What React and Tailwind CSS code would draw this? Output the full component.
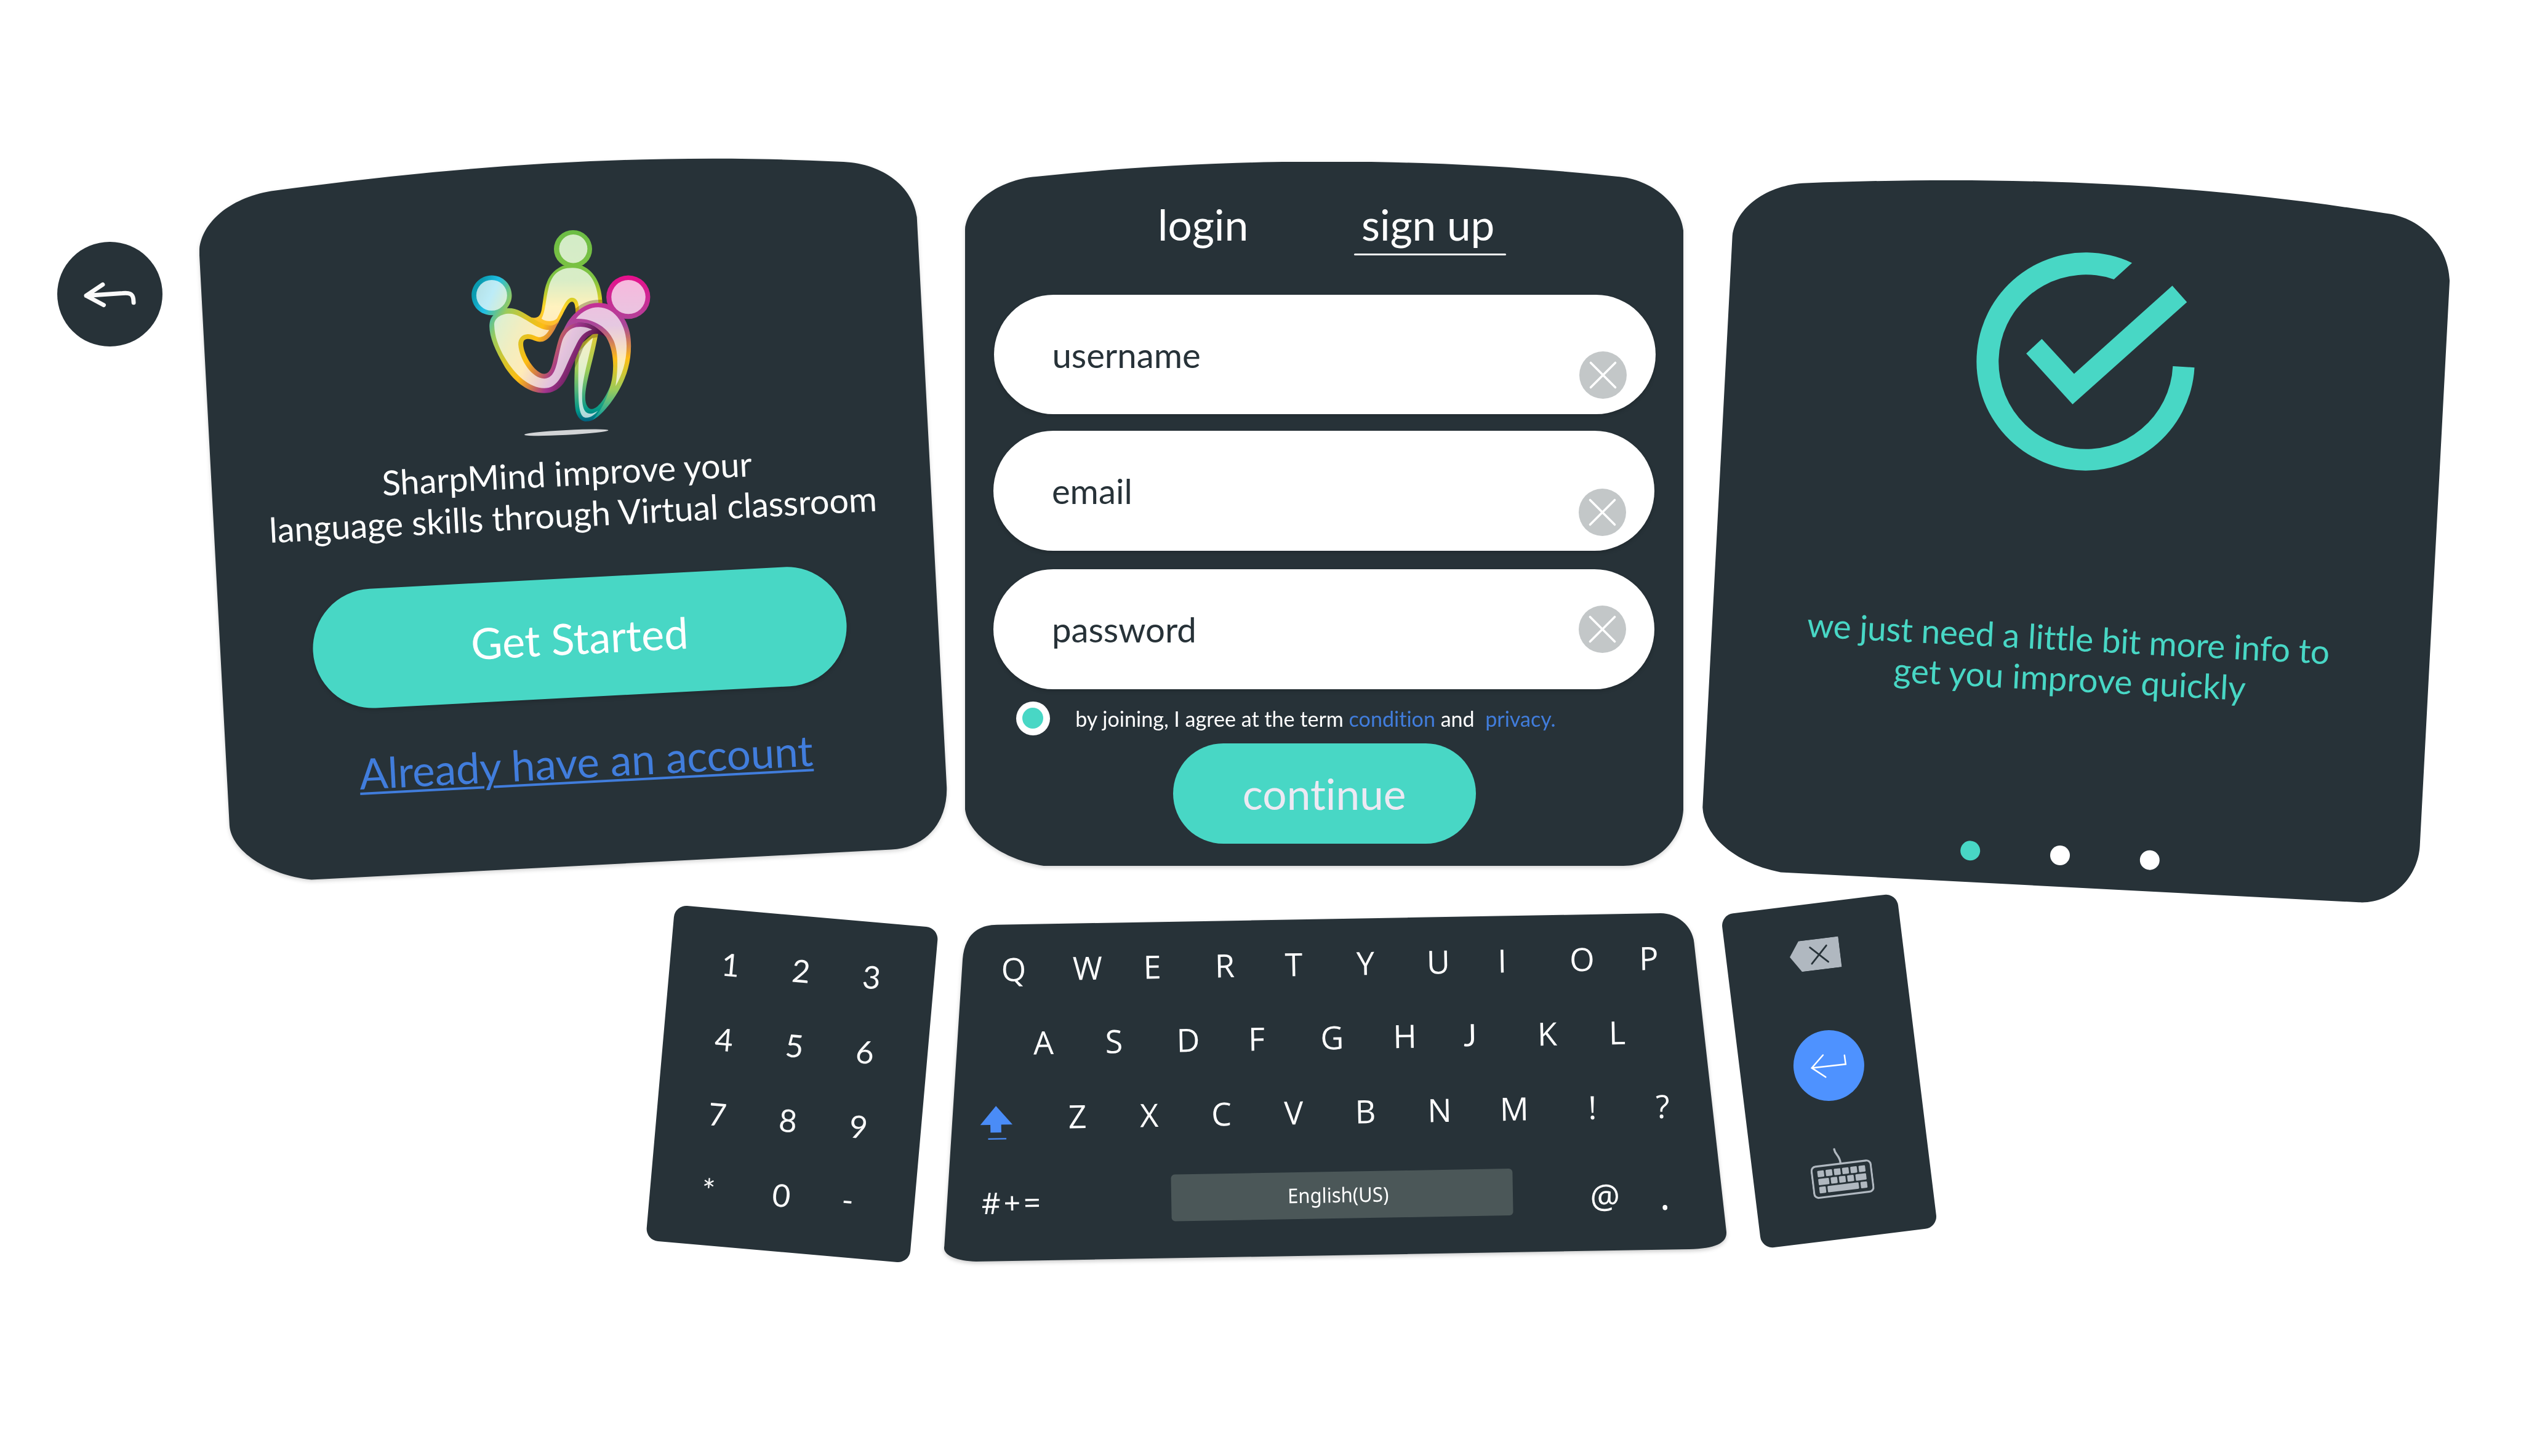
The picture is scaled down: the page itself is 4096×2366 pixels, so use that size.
import React from "react";

const row1 = [["Q", 112.8], ["W", 232.8], ["E", 338.1], ["R", 456], ["T", 567.9], ["Y", 684.5], ["U", 802.9], ["I", 906.8], ["O", 1036.6], ["P", 1145]];
const row2 = [["A", 161.3], ["S", 275.8], ["D", 396.5], ["F", 507.5], ["G", 630.3], ["H", 748.5], ["J", 854.5], ["K", 980], ["L", 1093.5]];
const row3 = [["shift", 83.9], ["Z", 216.5], ["X", 333.2], ["C", 450.5], ["V", 567.9], ["B", 684.6], ["N", 805.1], ["M", 926.5], ["!", 1053.3], ["?", 1167.4]];
const row4 = [["#+=", 111], ["space", 646], ["@", 1073.7], [".", 1170.8]];
const digits = ["1", "2", "3", "4", "5", "6", "7", "8", "9", "*", "0", "-"];

function Logo() {
  return (
    <svg className="ml-[411px] mt-[90px] h-[388px] w-[361px] shrink-0" viewBox="0 0 1560 1568" preserveAspectRatio="none">
      <defs>
        <linearGradient id="green" gradientUnits="userSpaceOnUse" x1="0" y1="110" x2="0" y2="730">
          <stop offset="0" stopColor="#6cbd45" />
          <stop offset="0.53" stopColor="#7fc342" />
          <stop offset="0.73" stopColor="#dccf26" />
          <stop offset="0.81" stopColor="#ffd528" />
          <stop offset="1" stopColor="#fdbd2d" />
        </linearGradient>
        <linearGradient id="leg" gradientUnits="userSpaceOnUse" x1="0" y1="780" x2="0" y2="1365">
          <stop offset="0" stopColor="#e6ca34" />
          <stop offset="0.2" stopColor="#c4cc48" />
          <stop offset="0.42" stopColor="#9ccb58" />
          <stop offset="0.65" stopColor="#53b478" />
          <stop offset="0.88" stopColor="#009688" />
          <stop offset="1" stopColor="#00607f" />
        </linearGradient>
        <linearGradient id="rainbow" gradientUnits="userSpaceOnUse" x1="312" y1="158" x2="1160" y2="587">
          <stop offset="0.03" stopColor="#0a9bb0" />
          <stop offset="0.144" stopColor="#20bfe5" />
          <stop offset="0.22" stopColor="#5bc29a" />
          <stop offset="0.295" stopColor="#9ccb5a" />
          <stop offset="0.43" stopColor="#d4c52c" />
          <stop offset="0.58" stopColor="#fdbd12" />
          <stop offset="0.667" stopColor="#d98540" />
          <stop offset="0.737" stopColor="#bd5a68" />
          <stop offset="0.8" stopColor="#a33590" />
          <stop offset="0.905" stopColor="#752466" />
          <stop offset="1" stopColor="#430c3a" />
        </linearGradient>
        <linearGradient id="pink" gradientUnits="userSpaceOnUse" x1="0" y1="405" x2="0" y2="1355">
          <stop offset="0" stopColor="#e80f8c" />
          <stop offset="0.2" stopColor="#c53095" />
          <stop offset="0.345" stopColor="#a9489a" />
          <stop offset="0.42" stopColor="#c2696f" />
          <stop offset="0.5" stopColor="#df9345" />
          <stop offset="0.575" stopColor="#fdbb14" />
          <stop offset="0.65" stopColor="#dbc52a" />
          <stop offset="0.79" stopColor="#9ccb5a" />
          <stop offset="0.9" stopColor="#4cb585" />
          <stop offset="1" stopColor="#0098a0" />
        </linearGradient>
      </defs>
      <path fill="url(#leg)" d="M900,860 L862,960 C858,1030 856,1100 857,1160 C858,1230 861,1280 868,1303 C882,1348 912,1365 940,1365 C965,1365 985,1360 1010,1340 C1090,1270 1130,1150 1125,1090 C1095,1180 1030,1284 977,1284 C955,1284 933,1255 933,1210 C933,1110 985,985 1023,790 L1000,780 Z" />
      <path fill="#fff" opacity="0.7" d="M988,812 L889,905 C884,1000 882,1100 886,1210 C889,1300 905,1340 940,1341 C975,1340 1000,1318 1023,1295 C1000,1308 985,1314 970,1314 C930,1314 911,1280 911,1200 C911,1090 945,1000 988,812Z" />
      <path fill="#403000" opacity="0.32" d="M1022,788 L1018,812 C960,815 930,850 905,915 C880,975 868,1000 859,1017 L862,940 C900,860 930,800 1000,780Z" />
      <ellipse cx="847" cy="233" rx="134" ry="124" fill="url(#green)" />
      <ellipse cx="849" cy="231" rx="99" ry="94" fill="#fff" opacity="0.7" />
      <path fill="url(#green)" d="M778,342 L912,342 C1010,385 1050,480 1053,590 L1040,650 L865,652 C865,620 862,580 840,579 C812,580 790,640 748,708 C730,760 640,770 540,680 C600,695 618,672 627,630 C642,550 640,510 665,450 C685,395 730,360 778,342Z" />
      <path fill="#fff" opacity="0.7" d="M842,357 C960,357 1020,450 1026,590 L889,640 C889,600 882,553 839,553 C800,553 775,620 735,688 C715,712 650,712 626,690 C655,640 655,560 675,490 C695,410 740,357 842,357Z" />
      <path fill="#403000" opacity="0.32" d="M864,624 C920,582 980,562 1053,567 L1053,610 L864,660Z" />
      <path fill="url(#rainbow)" d="M276,406 C354,406 417,465 417,537 C417,570 403,598 383,622 C450,618 500,652 550,680 C590,702 640,735 690,735 C720,735 740,715 750,703 C720,760 685,835 625,842 C590,846 565,823 530,823 C500,825 495,840 498,870 C510,950 590,1053 645,1053 C690,1050 700,1000 712,950 C735,870 745,810 775,770 C800,730 850,715 905,717 C980,722 1050,760 1085,815 C1040,788 1010,788 985,793 C940,800 910,850 880,920 C840,1000 815,1070 780,1115 C740,1160 700,1179 645,1179 C540,1180 440,1110 370,1010 C300,900 260,810 260,740 C261,705 270,685 288,668 C198,672 135,609 135,537 C135,465 198,406 276,406Z" />
      <ellipse cx="276" cy="537" rx="108" ry="101" fill="#fff" opacity="0.7" />
      <path fill="#fff" opacity="0.7" d="M294,735 C290,690 340,658 400,658 C450,658 490,685 540,712 C590,740 630,764 679,765 C660,795 640,812 608,812 C575,805 560,792 530,792 C490,793 462,820 463,860 C470,960 560,1084 645,1084 C700,1080 718,1040 735,980 C755,900 765,830 790,800 C820,755 860,744 900,744 C935,745 960,753 981,763 C920,775 890,820 865,870 C820,950 790,1030 760,1075 C725,1130 690,1147 645,1147 C540,1145 440,1060 370,950 C320,870 296,800 294,735Z" />
      <path fill="url(#pink)" d="M772,790 C790,730 830,680 865,652 C920,604 970,586 1025,587 C1055,587 1075,591 1090,596 L1207,690 C1245,750 1254,810 1254,870 C1253,1000 1210,1120 1110,1245 C1060,1305 1020,1340 985,1355 C1060,1280 1100,1180 1120,1090 C1135,1010 1135,900 1080,812 C1030,750 970,718 905,717 C850,715 800,740 772,790Z" />
      <ellipse cx="1235" cy="549" rx="154" ry="143" fill="url(#pink)" />
      <ellipse cx="1236" cy="548" rx="120" ry="112" fill="#fff" opacity="0.7" />
      <path fill="#fff" opacity="0.7" d="M868,691 C910,640 970,615 1025,615 C1150,617 1224,740 1223,870 C1223,980 1190,1060 1146,1134 C1165,1010 1165,900 1130,830 C1090,750 990,685 868,691Z" />
      <ellipse cx="800" cy="1438" rx="295" ry="16" fill="#d2d4d6" transform="rotate(-2.8 800 1438)" />
    </svg>
  );
}

function Shape({ children, className }) {
  return <div className={"flex flex-col bg-[#273238] " + className}>{children}</div>;
}

function WelcomeCard() {
  return (
    <section className="ml-[60px] shrink-0 drop-shadow-[0_3px_3px_rgba(0,0,0,0.16)]">
      <Shape className="h-[1173px] w-[1215px] [clip-path:path('M0,152_C2,108_45,66_116.7,53.6_C427,11_735,-10_1047,6.1_C1112,9_1160,48_1166,95.7_L1214.5,1022_C1216,1075_1185,1120_1124.6,1123.6_L182.3,1172.6_C110,1165_52,1125_49.2,1084.6_Z')]">
        <Logo />
        <div className="flex w-[1215px] origin-[617px_301px] rotate-[-3deg] flex-col items-center pl-[20px]">
          <p className="text-center text-[55.7px] leading-[66.6px] text-white">
            <span className="mr-[13px]">SharpMind improve your</span>
            <br />
            language skills through Virtual classroom
          </p>
          <button className="mt-[71px] h-[194px] w-[868px] rounded-full bg-[#48d7c5] text-[70px] leading-[83px] text-white shadow-[0_3px_6px_rgba(0,0,0,0.16)]">Get Started</button>
          <a className="mt-[64px] text-[69px] leading-[82px] text-[#417ddc] underline decoration-[4px] underline-offset-[5px]">Already have an account</a>
        </div>
      </Shape>
    </section>
  );
}

function Field({ label, className, clearClass }) {
  return (
    <div className={"flex h-[194.5px] w-[1074.5px] shrink-0 items-center justify-between rounded-full bg-white pr-[47px] shadow-[0_3px_6px_rgba(0,0,0,0.16)] " + className}>
      <span className="text-[56.3px] leading-[68px] text-[#273238]">{label}</span>
      <svg className={"h-[77px] w-[77px] " + clearClass} viewBox="0 0 77 77">
        <circle cx="38.5" cy="38.5" r="38.5" fill="#c3c7c8" />
        <path d="M18.5 18.5 L58.5 58.5 M58.5 18.5 L18.5 58.5" stroke="#fff" strokeWidth="3.6" strokeLinecap="round" />
      </svg>
    </div>
  );
}

function SignUpCard() {
  return (
    <section className="ml-[29px] mt-[5.5px] shrink-0 drop-shadow-[0_3px_3px_rgba(0,0,0,0.16)]">
      <Shape className="h-[1144.5px] w-[1167.5px] [clip-path:path('M0,116_C0,72_50,30_116,24.5_C426,-8.2_748,-8.2_1058.5,24.2_C1120,28_1167,75_1167.5,116_L1167.5,1047.4_C1167.5,1100_1125,1144.4_1070,1144.4_L128,1144.4_C60,1135_0,1090_0,1047.4_Z')]">
        <nav className="flex items-start pl-[313px] pt-[60px] text-white">
          <button className="w-[150px] pr-[2px] text-[69.6px] leading-[83px]">login</button>
          <button className="ml-[169px] flex w-[247px] flex-col items-center gap-[6px] text-[69.2px] leading-[83px]">
            <span className="pr-[6px]">sign up</span>
            <span className="h-[3.6px] w-[247px] rounded-full bg-white" />
          </button>
        </nav>
        <Field label="username" className="ml-[47.7px] mt-[63.5px] pl-[94px]" clearClass="translate-y-[34px]" />
        <Field label="email" className="ml-[46.2px] mt-[27px] pl-[95px]" clearClass="translate-x-[1px] translate-y-[35px]" />
        <Field label="password" className="ml-[46.2px] mt-[30.5px] pl-[95px]" clearClass="translate-x-[1px]" />
        <div className="ml-[83px] mt-[20px] flex shrink-0 items-center">
          <span className="flex h-[55px] w-[55px] items-center justify-center rounded-full bg-white">
            <span className="h-[34px] w-[34px] rounded-full bg-[#48d7c5]" />
          </span>
          <p className="ml-[41.5px] whitespace-pre text-[34.1px] leading-[41px] text-white">
            by joining, I agree at the term <a className="text-[#417ddc]">condition</a>
            {" and  "}
            <a className="text-[#417ddc]">privacy.</a>
          </p>
        </div>
        <button className="ml-[338px] mt-[13px] h-[163px] w-[492px] shrink-0 rounded-full bg-[#48d7c5] text-[69.4px] leading-[83px] text-[#ece9f3]">continue</button>
      </Shape>
    </section>
  );
}

function InfoCard() {
  return (
    <section className="ml-[30.5px] mt-[35px] shrink-0">
      <Shape className="h-[1175px] w-[1215px] [clip-path:path('M49,91.3_C55,45_105,8_168.4,5.5_C500,-7_800,5_1108,54.3_C1165,60_1212,105_1214.4,164_L1166,1082_C1163,1135_1120,1177_1067,1174.3_L127.5,1125.4_C60,1113_3,1070_0.6,1020_Z')]">
        <svg className="ml-[432.8px] mt-[105.5px] h-[378px] w-[384.7px] shrink-0" viewBox="560 170 470 480" preserveAspectRatio="none" fill="#48d7c5">
          <path d="M885,207 A216.5,225 0 1 0 1009,423 L966,420 A173,180 0 1 1 849,241 Z" />
          <path d="M706,364 L770,436 L965,254 L994,288 L767,499 L675,394Z" />
        </svg>
        <p className="ml-[143px] mt-[227px] w-[900px] rotate-[3deg] whitespace-nowrap text-center text-[55px] leading-[66px] text-[#48d7c5]">
          <span className="tracking-[-0.22px]">we just need a little bit more info to</span>
          <br />
          <span className="pl-[11px]">get you improve quickly</span>
        </p>
        <div className="ml-[419px] mt-[239.5px] flex w-[324px] rotate-[3deg] justify-between">
          <span className="h-[32px] w-[32px] rounded-full bg-[#48d7c5]" />
          <span className="h-[32px] w-[32px] rounded-full bg-white" />
          <span className="h-[32px] w-[32px] rounded-full bg-white" />
        </div>
      </Shape>
    </section>
  );
}

function Keypad() {
  return (
    <section className="ml-[1072px] mt-[35px] flex h-[547px] w-[430px] shrink-0 rotate-[5deg] items-center justify-center rounded-[20px] bg-[#273238] pb-[2px] pr-[3px]">
      <div className="grid grid-cols-[repeat(3,115px)] auto-rows-[122px] place-items-center text-[51px] text-[#fafafa]">
        {digits.map((d) => (
          <span key={d} className={d === "-" ? "-translate-x-[7px] -translate-y-[2px]" : d === "*" ? "-translate-x-[4px] translate-y-[2px]" : ""}>{d}</span>
        ))}
      </div>
    </section>
  );
}

function Key({ label }) {
  if (label === "shift")
    return (
      <svg className="h-[60px] w-[56px] shrink-0 translate-y-[9px]" viewBox="160 855 140 165" preserveAspectRatio="none" fill="#4a8cf7">
        <path d="M231,862 L297,946 H251 V981 H207 V946 H166Z M197,1006 H271 V1012 H197Z" />
      </svg>
    );
  if (label === "space")
    return (
      <span className="flex h-[76px] w-[555px] shrink-0 items-center justify-center rounded-[6px] bg-[#4b5758] pr-[11px] font-['Noto_Sans',sans-serif] text-[33px]">
        <span className="scale-x-[0.943]">English(US)</span>
      </span>
    );
  if (label === "#+=") return <span className="translate-y-[3px] whitespace-nowrap font-['Noto_Sans',sans-serif] text-[48px] tracking-[5px]">#+=</span>;
  if (label === "@") return <span className="translate-y-[8px] font-['Noto_Sans',sans-serif] text-[54px]">@</span>;
  if (label === ".") return <span className="translate-y-[9px] font-['Noto_Sans',sans-serif] text-[62px]">.</span>;
  if (label === "J") return <span className="font-['Lato',sans-serif] text-[50px]">J</span>;
  return <span>{label}</span>;
}

function KeyRow({ keys, className }) {
  return (
    <div className={"flex w-[1272px] shrink-0 rotate-[-1deg] items-center " + className}>
      {keys.map(([label, x], i) => (
        <span key={label} className="flex w-0 items-center justify-center" style={{ marginLeft: x - (i ? keys[i - 1][1] : 0) }}>
          <Key label={label} />
        </span>
      ))}
    </div>
  );
}

function Keyboard() {
  return (
    <section className="ml-[32px] mt-[31px] shrink-0 drop-shadow-[0_3px_3px_rgba(0,0,0,0.2)]">
      <Shape className="h-[566px] w-[1272px] font-['Open_Sans','Noto_Sans',sans-serif] text-[52px] leading-[70px] text-white [clip-path:path('M30,75_C33,38_52,19_85.9,18.8_L1164.3,0_C1190,0_1216,20_1218.5,48_L1271,518_C1272,535_1255,545_1209.9,545.9_L52,566_C18,565_-3,555_0.3,541_Z')]">
        <KeyRow keys={row1} className="mt-[20.5px] h-[120.5px]" />
        <KeyRow keys={row2} className="h-[120.5px]" />
        <KeyRow keys={row3} className="h-[120px]" />
        <KeyRow keys={row4} className="mt-[16px] h-[120px]" />
      </Shape>
    </section>
  );
}

function Actions() {
  const keys = [];
  for (let i = 0; i < 6; i++) keys.push([10.7 + i * 13.5, 34.2, 10.7]);
  keys.push([10.7, 47.4, 17.5], [31, 47.4, 10.7], [44.5, 47.4, 10.7], [58, 47.4, 10.7], [71.5, 47.4, 17.5]);
  keys.push([10.7, 60.6, 10.7], [24.2, 60.6, 51], [78.2, 60.6, 10.7]);
  return (
    <section className="ml-[22.3px] mt-[13.6px] flex h-[546.6px] w-[288px] shrink-0 rotate-[-7deg] flex-col items-center rounded-[20px] bg-[#273238]">
      <svg className="mt-[58px] h-[50px] w-[82px]" viewBox="0 0 82 50">
        <path d="M17 0 H82 V50 H17 L0 24Z" fill="#b0b8c0" />
        <path d="M34.3 12.3 L61.2 39 M61.2 12.3 L34.3 39" stroke="#273238" strokeWidth="2.8" strokeLinecap="round" />
      </svg>
      <button className="mt-[98.5px] flex h-[115px] w-[115px] items-center justify-center rounded-full bg-[#4e92ff]">
        <svg className="h-[115px] w-[115px]" viewBox="-57.5 -57.5 115 115" fill="none" stroke="#fff" strokeWidth="2.5" strokeLinecap="round">
          <path d="M-7.4 -18 L-28 0.5 L-7.4 18 M-28 0.5 L27.4 1.2 L27.2 -13.5" />
        </svg>
      </button>
      <svg className="mt-[76.5px] h-[81px] w-[100px]" viewBox="0 0 100 81">
        <rect x="1.6" y="27" width="96.8" height="51" rx="7" fill="none" stroke="#b0b8c0" strokeWidth="3.2" />
        <path d="M42.5 2.5 C43 12 50 13 50 26" fill="none" stroke="#b0b8c0" strokeWidth="3.4" strokeLinecap="round" />
        {keys.map(([x, y, w], i) => (
          <rect key={i} x={x} y={y} width={w} height="10.4" rx="1.4" fill="#b0b8c0" />
        ))}
      </svg>
    </section>
  );
}

export default function App() {
  return (
    <main className="h-[2366px] w-[4096px] overflow-hidden bg-white pt-[257px] font-['Lato',sans-serif] [font-variant-ligatures:none]">
      <div className="flex h-[1196px] items-start pl-[93.2px]">
        <button className="mt-[135.5px] h-[170.5px] w-[170.5px] shrink-0 rounded-full bg-[#273238]">
          <svg className="h-full w-full" viewBox="103 78 736 737" fill="none" stroke="#fafafa" strokeWidth="30" strokeLinecap="round" strokeLinejoin="round">
            <path d="M422,378 L306,456 L429,522 M306,456 L560,439 C610,434 632,442 637,480 L639,505" />
          </svg>
        </button>
        <WelcomeCard />
        <SignUpCard />
        <InfoCard />
      </div>
      <div className="flex items-start">
        <Keypad />
        <Keyboard />
        <Actions />
      </div>
    </main>
  );
}
